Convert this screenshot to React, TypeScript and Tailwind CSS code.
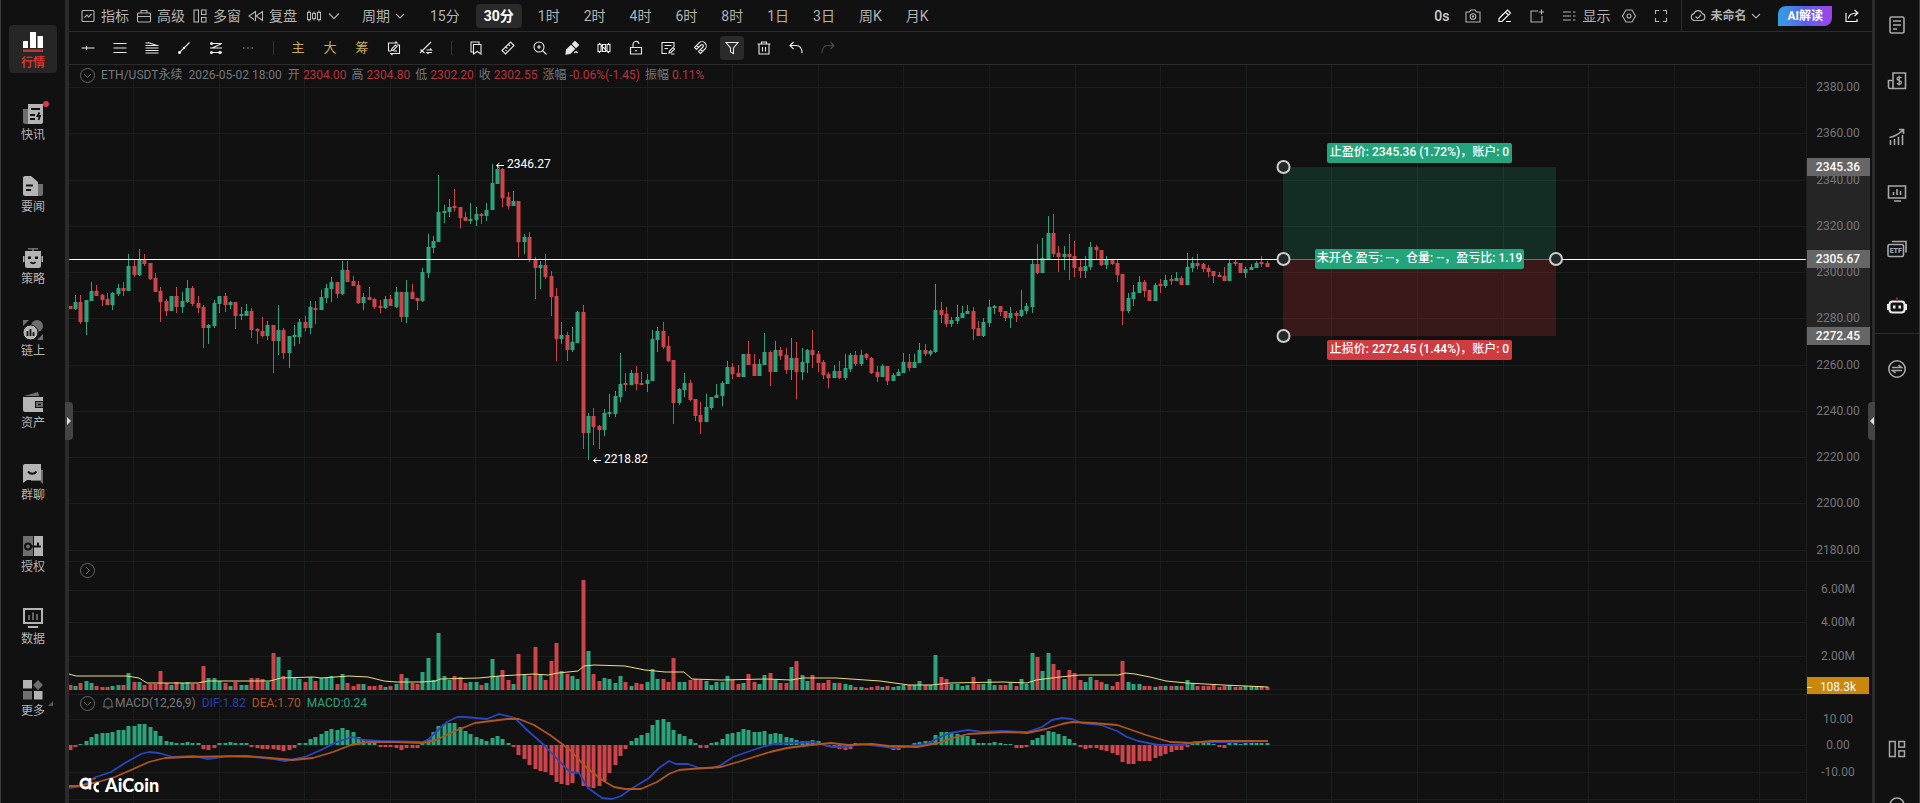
import { useState, type ReactNode } from 'react';

// [up, body top, body bottom, high, low]
type Candle = [number, number, number, number, number];

const CANDLES: Candle[] = [
  [0,306,309,306,309],[1,302,309,295,310],[0,302,322,295,324],[1,300,322,300,335],[1,291,301,282,301],
  [0,291,296,285,296],[0,295,300,294,306],[0,299,305,293,305],[1,293,305,292,310],[1,288,294,284,296],
  [0,288,291,282,296],[1,266,291,254,291],[0,266,275,259,277],[1,260,275,249,276],[0,259,264,254,266],
  [0,263,279,263,280],[0,278,292,273,292],[0,291,302,287,322],[0,301,311,299,316],[1,296,311,296,311],
  [0,296,307,287,313],[1,301,307,292,313],[1,288,302,280,303],[0,288,304,286,306],[0,303,308,296,313],
  [0,307,328,305,348],[1,325,328,324,344],[1,303,326,300,328],[1,296,304,296,313],[0,296,305,293,312],
  [1,302,305,301,309],[0,302,316,302,329],[1,314,316,307,320],[1,311,316,304,316],[0,311,330,308,338],
  [0,329,331,328,344],[0,331,336,317,337],[1,325,336,321,340],[0,325,341,325,373],[1,330,341,305,355],
  [0,330,353,328,359],[1,336,353,336,368],[1,335,337,325,346],[1,322,337,319,344],[0,322,328,316,331],
  [1,307,328,301,334],[0,308,310,301,324],[1,297,310,290,310],[1,288,298,284,303],[1,282,289,277,302],
  [0,282,294,282,298],[1,270,294,261,295],[0,270,282,261,282],[0,281,286,276,286],[0,285,303,281,304],
  [1,297,303,293,310],[0,297,300,287,300],[0,299,307,298,309],[0,306,308,300,313],[1,299,308,296,309],
  [0,299,306,295,306],[1,292,307,287,308],[0,292,317,292,322],[1,292,317,280,323],[0,292,299,284,299],
  [0,298,301,298,310],[1,272,301,268,302],[1,247,273,234,278],[1,241,248,236,253],[1,212,242,175,242],
  [1,211,213,205,223],[1,207,212,199,217],[0,206,208,189,211],[0,207,218,207,228],[0,217,221,212,221],
  [1,219,221,203,224],[1,214,220,207,226],[0,214,216,213,224],[1,210,216,203,221],[1,183,210,164,210],
  [1,169,184,166,184],[0,169,198,168,207],[0,197,206,192,209],[1,201,206,191,206],[0,201,242,201,257],
  [1,237,242,234,254],[0,237,259,232,262],[0,259,268,257,299],[1,265,268,261,289],[0,265,277,254,279],
  [0,276,297,271,316],[0,296,339,288,361],[1,335,339,322,344],[0,335,350,332,361],[1,342,350,327,352],
  [1,312,343,311,343],[0,312,433,305,449],[1,416,433,413,460],[0,416,427,408,445],[0,426,430,425,449],
  [1,413,430,409,436],[1,412,414,394,417],[1,396,414,391,417],[1,384,397,353,402],[0,383,385,373,391],
  [1,373,385,370,385],[0,373,384,366,390],[0,383,385,372,385],[1,380,384,374,392],[1,339,381,330,381],
  [1,331,340,327,352],[0,331,347,322,349],[0,346,361,336,362],[0,360,403,360,424],[1,389,403,388,405],
  [1,383,390,373,397],[0,383,400,380,401],[0,399,416,399,421],[0,415,422,402,434],[1,407,422,394,422],
  [1,397,408,397,410],[1,395,398,384,398],[1,383,396,381,406],[1,367,384,361,384],[0,367,374,363,379],
  [0,373,377,365,377],[1,354,377,354,377],[0,354,365,341,365],[0,364,376,354,376],[1,364,376,359,376],
  [1,352,365,333,365],[0,352,372,351,386],[1,350,372,341,372],[0,350,356,347,360],[0,355,370,348,374],
  [1,358,370,338,380],[0,358,372,342,399],[1,362,372,348,380],[1,350,363,349,373],[0,350,355,330,368],
  [0,354,363,351,372],[0,362,375,360,379],[0,374,378,372,388],[1,371,378,365,378],[0,371,378,361,379],
  [1,368,378,354,380],[1,355,369,353,372],[0,355,364,351,366],[1,355,364,350,366],[0,354,358,353,360],
  [0,358,373,357,374],[0,372,377,366,382],[1,366,377,364,377],[0,366,381,366,385],[1,375,381,373,381],
  [1,372,376,369,376],[1,362,373,353,373],[0,362,368,354,371],[1,362,368,354,368],[1,350,363,343,363],
  [0,350,354,344,356],[1,351,354,350,356],[1,310,352,284,353],[0,310,315,302,323],[0,314,324,307,327],
  [1,320,324,317,327],[1,317,321,305,324],[1,313,318,306,318],[1,311,314,305,314],[0,311,329,307,340],
  [0,328,336,321,336],[1,322,336,318,337],[1,307,323,300,327],[1,306,308,305,314],[0,306,312,306,316],
  [0,311,318,311,321],[1,313,318,307,328],[0,313,316,311,322],[1,310,316,290,317],[1,306,311,303,314],
  [1,264,307,260,313],[0,264,273,244,274],[1,258,273,238,273],[1,233,260,216,260],[0,233,254,214,257],
  [0,253,257,246,272],[1,254,257,246,270],[0,254,257,234,280],[0,256,268,241,277],[0,267,271,260,278],
  [1,266,271,256,278],[1,247,267,242,270],[0,247,250,245,260],[0,250,265,250,266],[1,260,265,256,269],
  [0,260,264,259,265],[0,263,275,260,282],[0,274,311,274,325],[1,298,311,293,313],[1,292,299,285,306],
  [1,282,293,276,293],[0,282,291,280,297],[0,290,301,290,301],[1,285,301,283,301],[0,284,286,279,293],
  [1,280,286,275,288],[0,279,281,275,285],[1,278,281,272,281],[0,278,285,276,285],[1,267,285,253,285],
  [1,263,268,257,272],[0,263,266,254,269],[0,264,269,263,272],[0,268,272,265,277],[0,271,276,271,283],
  [0,275,277,272,277],[0,276,281,267,281],[1,263,281,260,281],[0,262,264,260,266],[0,263,273,263,273],
  [1,269,273,267,278],[1,267,270,264,270],[1,263,268,261,268],[0,262,264,256,267],[0,263,267,261,267],
];

const VOLUMES = [
  5,4,7,9,7,4,3,3,4,5,5,17,8,8,5,6,6,19,7,5,8,7,8,6,6,24,12,12,9,7,4,8,5,5,12,12,11,8,37,33,14,20,12,11,8,
  13,9,12,12,14,6,16,7,4,6,6,4,4,5,3,4,6,16,12,7,6,18,32,10,57,14,10,14,13,7,8,8,5,7,31,14,20,10,6,36,15,14,
  43,16,10,29,47,19,16,14,11,110,39,16,9,12,11,7,14,8,4,7,6,8,21,11,11,8,32,8,8,10,11,10,9,5,8,8,14,10,6,7,
  16,8,6,15,17,10,7,7,23,29,15,9,15,7,7,10,7,7,6,5,3,3,2,3,4,3,4,3,4,5,5,5,9,5,5,35,13,11,6,6,4,5,13,6,6,11,
  5,5,5,7,4,11,6,37,33,19,37,26,20,11,20,17,10,8,13,10,8,6,4,8,29,8,6,6,4,4,3,4,4,4,4,4,10,7,4,4,4,5,3,4,5,
  3,3,4,4,4,4,3,
];

const HISTOGRAM = [
  -5,-2,1,4,8,11,12,12,13,15,15,19,19,21,21,18,14,9,4,3,2,2,3,2,2,-4,-5,-3,2,2,3,2,2,2,-2,-3,-4,-4,-4,-5,-6,
  -5,-3,2,2,6,8,11,14,16,15,17,15,13,8,6,3,2,-2,-2,-2,-3,-5,-3,-3,-3,2,6,13,19,21,22,22,18,14,11,8,6,4,7,9,6,
  2,-2,-10,-14,-20,-24,-26,-27,-30,-37,-39,-40,-38,-28,-41,-42,-43,-41,-36,-28,-20,-11,-4,4,7,10,12,20,25,26,
  23,15,11,9,6,2,-3,-3,2,3,6,11,12,13,16,15,13,13,14,11,12,11,8,7,5,4,4,5,4,2,-2,-3,-4,-5,-4,2,1,1,2,1,-2,-3,
  -5,-5,-3,-2,2,3,4,4,10,13,13,13,11,10,9,6,2,2,2,3,2,1,1,-3,-3,-2,5,7,10,14,13,11,9,6,2,-2,-4,-3,-3,-5,-6,-8,
  -10,-17,-19,-19,-16,-16,-16,-13,-11,-9,-7,-5,-5,-2,1,2,2,2,1,-2,-3,2,2,1,2,2,2,2,2,
];

const DIF = '69,788 82,786 96,777 111,772 125,763 141,754 149,752 159,753 173,757 194,756 208,759 228,756 254,757 274,759 285,761 305,757 321,750 337,742 352,737 364,740 380,741 422,742 428,740 436,732 447,722 457,717 465,717 487,719 499,714 515,718 527,730 544,745 560,762 570,772 579,773 588,788 602,798 612,799 621,796 631,789 649,778 659,768 669,761 676,764 688,764 699,768 713,768 721,765 733,757 750,751 762,747 774,744 791,743 813,742 831,747 844,747 860,744 880,746 893,748 909,746 927,744 938,738 950,733 968,730 982,732 1001,731 1027,732 1042,727 1052,720 1062,718 1072,719 1082,723 1101,725 1117,731 1127,737 1138,741 1158,745 1182,745 1195,742 1223,742 1268,741';
const DEA = '69,786 78,786 98,782 115,777 131,770 149,762 165,758 187,757 246,756 270,758 293,760 313,758 333,752 351,745 368,742 396,742 422,743 436,740 455,731 475,723 491,721 507,719 519,719 534,725 550,735 570,750 586,767 602,780 614,787 625,789 641,789 657,782 669,774 679,770 691,769 721,767 738,762 754,757 770,752 787,748 811,745 831,743 848,745 872,744 889,746 917,747 938,743 956,737 968,734 987,733 1007,732 1027,733 1046,729 1062,724 1072,722 1093,723 1117,725 1129,729 1146,735 1170,742 1191,743 1211,741 1268,741';
const VOL_MA = '69,674 76,676 127,676 139,678 147,683 198,683 208,681 270,681 281,678 313,677 321,678 349,676 368,677 384,681 396,682 422,682 436,681 440,679 479,678 499,676 534,674 548,675 558,673 578,671 584,666 594,665 625,666 645,670 665,672 684,672 692,679 721,680 766,679 791,680 803,678 836,678 880,681 909,685 931,685 950,683 1003,682 1027,683 1036,680 1060,677 1080,675 1119,675 1125,673 1135,674 1150,677 1166,681 1187,683 1223,685 1268,687';

const UP = '#2da37d';
const DOWN = '#cd454b';
const GRID = '#1c1d1d';
const STEP = 5.345;
const FONT = "font-[Roboto,'Noto_Sans_CJK_SC',sans-serif]";

const candleX = (i: number) => Math.round(69.5 + i * STEP);
const priceY = (price: number) => Math.round(87 + (2380 - price) * 2.3135);

const PRICES = [2380, 2360, 2340, 2320, 2300, 2280, 2260, 2240, 2220, 2200, 2180];

interface IconProps {
  size?: number;
  box?: number;
  className?: string;
  children: ReactNode;
}

function Icon({ size = 16, box = 16, className = '', children }: IconProps) {
  return (
    <svg
      width={size}
      height={size}
      viewBox={`0 0 ${box} ${box}`}
      fill="none"
      stroke="currentColor"
      strokeWidth={1.1}
      className={`shrink-0 ${className}`}
      aria-hidden="true"
    >
      {children}
    </svg>
  );
}

// ---------- top toolbar ----------

const LAYOUT_GLYPH = (
  <>
    <rect x="2" y="2" width="4.5" height="12" />
    <rect x="9.5" y="2" width="4.5" height="4.5" />
    <rect x="9.5" y="9.5" width="4.5" height="4.5" />
  </>
);

const MENUS = [
  { label: '指标', icon: <><rect x="2" y="2.5" width="12" height="11" rx="1" /><path d="M4.5 9.5 7 7l1.5 2 3-3" /></> },
  { label: '高级', icon: <><rect x="1.5" y="5" width="13" height="9" rx="1" /><path d="M5 5V2.5h6V5M1.5 8.5h13" /></> },
  { label: '多窗', icon: LAYOUT_GLYPH },
  { label: '复盘', icon: <path d="M7.5 3.5v9L1 8zM14.5 3.5v9L8 8z" /> },
];

const PERIODS = ['15分', '30分', '1时', '2时', '4时', '6时', '8时', '1日', '3日', '周K', '月K'];

function Caret({ wide }: { wide?: boolean }) {
  return (
    <Icon size={12} box={12}>
      <path d={wide ? 'M1 3.5l5 5 5-5' : 'M2 4l4 4 4-4'} />
    </Icon>
  );
}

function TopBar() {
  const [period, setPeriod] = useState('30分');

  return (
    <header className="flex h-8 shrink-0 items-center border-b border-[#2c2c2c] pl-[11px] pr-3 text-sm text-[#b2b2b2]">
      <div className="flex items-center gap-[7px]">
        {MENUS.map((m) => (
          <button key={m.label} className="flex items-center gap-[5px] whitespace-nowrap">
            <Icon>{m.icon}</Icon>
            {m.label}
          </button>
        ))}
        <button className="flex items-center gap-1.5 px-0.5" aria-label="K线样式">
          <Icon>
            <rect x="1.5" y="4.5" width="3" height="7" />
            <rect x="6.500" y="5.500" width="3" height="5" />
            <rect x="11.5" y="4.5" width="3" height="7" />
            <path d="M3 2.500v2M3 11.500v2M8 3.500v2M8 10.500v2M13 2.500v2M13 11.500v2" />
          </Icon>
          <Caret wide />
        </button>
      </div>
      <div className="ml-3 flex items-center gap-2">
        <button className="flex items-center gap-1 whitespace-nowrap px-2">
          周期
          <Caret />
        </button>
        {PERIODS.map((p) => (
          <button
            key={p}
            onClick={() => setPeriod(p)}
            className={`h-6 whitespace-nowrap rounded px-2 ${p === period ? 'bg-[#2a2a2a] font-bold text-white' : ''}`}
          >
            {p}
          </button>
        ))}
      </div>

      <div className="ml-auto flex items-center">
        <span className="mr-3 font-medium text-[#cfcfcf]">0s</span>
        <div className="mr-3 flex gap-2">
          <button className="flex size-6 items-center justify-center" aria-label="截图">
            <Icon>
              <path d="M1 4h3.5L6 2h4l1.5 2H15v10H1z" />
              <circle cx="8" cy="8.5" r="2.8" />
              <circle cx="8" cy="8.5" r="0.6" />
            </Icon>
          </button>
          <button className="flex size-6 items-center justify-center text-white" aria-label="画线">
            <Icon><path d="M2 13.5v-3L10.5 2l3 3L5 13.5zM8.5 4l3 3M9 13.5h5" /></Icon>
          </button>
          <button className="flex size-6 items-center justify-center" aria-label="新建">
            <Icon><path d="M9 3H2v11h11V8M12.5 1.5v5M10 4h5" /></Icon>
          </button>
        </div>
        <button className="mr-[7px] flex items-center gap-[5px] whitespace-nowrap">
          <Icon><path d="M2 4h8M2 8h8M2 12h8M12 4h2.5M12 8h2.5M12 12h2.5" /></Icon>
          显示
        </button>
        <div className="mr-2 flex gap-2">
          <button className="flex size-6 items-center justify-center" aria-label="设置">
            <Icon><path d="M5 2h6l3.5 6L11 14H5L1.5 8z" /><circle cx="8" cy="8" r="2" /></Icon>
          </button>
          <button className="flex size-6 items-center justify-center" aria-label="全屏">
            <Icon><path d="M2.5 6V2.5H6M10 2.5h3.5V6M13.5 10v3.5H10M6 13.5H2.5V10" /></Icon>
          </button>
        </div>
        <div className="flex h-8 items-center border-l border-[#2c2c2c] pl-2">
          <button className="flex items-center gap-1 whitespace-nowrap text-xs font-bold">
            <Icon>
              <path d="M4.5 12.5A3.5 3.5 0 0 1 4 5.6a4.3 4.3 0 0 1 8.2 0 3.5 3.5 0 0 1-.7 6.9zM5.500 8.500l2 2L11 7" />
            </Icon>
            未命名
            <Caret />
          </button>
          <button className="ml-4 h-5 whitespace-nowrap rounded-tl-lg rounded-br-lg bg-linear-to-r from-[#2fa0e0] via-[#5560f0] to-[#a040e8] px-[9px] text-xs font-bold text-white">
            AI解读
          </button>
          <button className="ml-3 text-white" aria-label="分享">
            <Icon><path d="M2 5v8.5h11V11M4.5 10.5C4.500 6.500 7.500 5 13.500 5M10.500 2 14 5l-3.500 3" /></Icon>
          </button>
        </div>
      </div>
    </header>
  );
}

// ---------- drawing toolbar ----------

interface Tool {
  name: string;
  icon: ReactNode;
  className?: string;
}

const LINE_TOOLS: Tool[] = [
  { name: '水平线', icon: <path d="M1.5 8h13M6.5 6v4" /> },
  { name: '平行线', icon: <path d="M1.5 3.5h13M1.5 8h13M1.5 12.5h13" /> },
  { name: '斐波那契', icon: <path d="M1.5 3h5M1.5 5.5h13M1.5 8h13M1.5 10.5h13M1.5 13h13M4 2.5l9 3" /> },
  { name: '线段', icon: <><path d="M3 13 13.5 2.5" /><circle cx="3.5" cy="12.5" r="1" fill="currentColor" /><circle cx="8" cy="8" r="0.6" /></> },
  { name: '通道', icon: <><path d="M2 3.5h12M2 8h12M2 12.5h12M4 8l9-4" /><circle cx="3.5" cy="3.5" r="1" /><circle cx="12" cy="12.5" r="1.2" /><circle cx="3.5" cy="12.5" r="1" /></> },
  { name: '更多', icon: <path d="M3 8h1.5M7.3 8h1.5M11.5 8H13" />, className: 'text-[#9a9a9a]' },
];

const SIGNAL_TOOLS: Tool[] = [
  { name: '策略画图', icon: <path d="M5 11H2.5V3H11L9.500 1.500M11 5h2.500v8.500H5l1.500 1.500M5.500 10.500 6 8.500 9.500 5 11 6.500 7.500 10zM7.500 11h3.500" /> },
  { name: '趋势工具', icon: <path d="M2 13 13 2M2.5 9.5 6.5 13M8.5 10h5L12 8.5M14 12.5H9l1.5 1.5" /> },
];

const EDIT_TOOLS: Tool[] = [
  { name: '书签', icon: <><path d="M5.5 4.500H13V14l-3.7-2.500L5.500 14z" /><path d="M5 12H3V2h8v2" /></> },
  { name: '测量', icon: <path d="M2 10.5 10.5 2 14 5.5 5.5 14zM6 7l1.5 1.5M8.5 4.5 10 6M5.5 10l1 1" /> },
  { name: '放大', icon: <><circle cx="7" cy="7" r="5" /><path d="m10.5 10.5 4 4M7 5v4M5 7h4" /></> },
  { name: '画笔', icon: <><path d="M2.5 10 7 5.5 10.5 9 6 13.5 2 14zM8.5 4 11 1.500 14.500 5 12 7.500z" fill="currentColor" /><path d="m10 13 2-1.5 1.5 1.5" /></> },
  { name: '隐藏K线', icon: <path d="M2 4.5h3v7H2zM6.5 4.5h3v7h-3zM11 4.5h3v7h-3zM3.5 3v1.5M3.5 11.5V13M12.5 3v1.5M12.5 11.5V13M3 3l10 10" /> },
  { name: '锁定', icon: <path d="M2.5 7.5h11V14h-11zM5 7.5V5a3 3 0 0 1 6-1M7 10.8h2" /> },
  { name: '备注', icon: <path d="M7 13.5H2v-11h12V7M4.5 5.5h7M4.5 8.5H8M9 13l.5-2L13 7.5 14.5 9 11 12.5zM11 14h3.5" /> },
  { name: '磁铁', icon: <path d="M2.5 7.5 7 3a4.2 4.2 0 0 1 6 6l-4.5 4.5-2-2L11 7a1.4 1.4 0 0 0-2-2L4.5 9.5zM4.5 5.5l2 2M8.5 9.5l2 2" /> },
  { name: '筛选', icon: <path d="M2 2.5h12L9.5 8v5.5l-3-1.5V8z" />, className: 'bg-[#2a2a2a]' },
  { name: '删除', icon: <path d="M1.5 4h13M5.5 4V2h5v2M3 4v10h10V4M6.5 7v4.5M9.5 7v4.5" /> },
  { name: '撤销', icon: <path d="M5.5 2 2 5.5 5.5 9M2 5.5h6c3.5 0 6 2.5 6 7.5" /> },
  { name: '重做', icon: <path d="M10.5 2 14 5.5 10.5 9M14 5.5H8c-3.5 0-6 2.5-6 7.5" />, className: 'text-[#4a4a4a]' },
];

function ToolButton({ tool }: { tool: Tool }) {
  return (
    <button aria-label={tool.name} className={`flex size-6 items-center justify-center rounded ${tool.className ?? ''}`}>
      <Icon>{tool.icon}</Icon>
    </button>
  );
}

function Divider() {
  return (
    <div className="flex w-[10px] justify-center">
      <div className="h-3.5 w-px bg-[#333]" />
    </div>
  );
}

function DrawBar() {
  return (
    <div className="flex h-[33px] shrink-0 items-center gap-2 border-b border-[#2c2c2c] px-[7px] text-[#e8e8e8]">
      {LINE_TOOLS.map((t) => <ToolButton key={t.name} tool={t} />)}
      <Divider />
      {['主', '大', '筹'].map((t) => (
        <button key={t} className="size-6 text-[13px] leading-6 text-[#c9ad4b]">{t}</button>
      ))}
      {SIGNAL_TOOLS.map((t) => <ToolButton key={t.name} tool={t} />)}
      <Divider />
      {EDIT_TOOLS.map((t) => <ToolButton key={t.name} tool={t} />)}
    </div>
  );
}

// ---------- charts ----------

function Pane({ top, rows, header, children, axis, className }: {
  top: number;
  rows: number[];
  header?: ReactNode;
  children: ReactNode;
  axis: ReactNode;
  className: string;
}) {
  const columns = Array.from({ length: 40 }, (_, i) => Math.round(133 + i * 85.6));
  return (
    <section className={`relative flex min-h-0 overflow-hidden ${className}`}>
      <svg className="h-full min-w-0 flex-1" aria-hidden="true">
        <g transform={`translate(-69 ${-top})`}>
          {columns.map((x) => <rect key={x} x={x} y={0} width={1} height={2000} fill={GRID} />)}
          {rows.map((y) => <rect key={y} x={69} y={y} width="100%" height={1} fill={GRID} />)}
          {children}
        </g>
      </svg>
      <svg className={`h-full w-[66px] shrink-0 border-l border-[#1e1e1e] ${FONT} text-xs`}>
        <g transform={`translate(-1 ${-top})`} fill="#74767c" textAnchor="middle">{axis}</g>
      </svg>
      {header}
    </section>
  );
}

function CollapseButton({ open, label }: { open: boolean; label: string }) {
  return (
    <button aria-label={label} className="text-[#666]">
      <Icon size={15} box={15} className="[stroke-width:1]">
        <circle cx="7.5" cy="7.5" r="7" />
        <path d={open ? 'M4 6l3.500 3.500L11 6' : 'M6 4l3.500 3.500L6 11'} />
      </Icon>
    </button>
  );
}

const QUOTE = [
  ['开', '2304.00'],
  ['高', '2304.80'],
  ['低', '2302.20'],
  ['收', '2302.55'],
  ['涨幅', '-0.06%(-1.45)'],
  ['振幅', '0.11%'],
];

function PriceTag({ price }: { price: number }) {
  const y = priceY(price);
  return (
    <>
      <rect x={0} y={y - 9} width={64} height={18} fill="#666" />
      <text x={32} y={y + 4} fill="#fff" fontWeight="500">{price.toFixed(2)}</text>
    </>
  );
}

function PositionLabel({ y, width, fill, children }: { y: number; width: number; fill: string; children: string }) {
  return (
    <>
      <rect x={1419.5 - width / 2} y={y} width={width} height={20} rx={2} fill={fill} />
      <text x={1419.5} y={y + 13} fill="#fff" fontWeight="500" textAnchor="middle">{children}</text>
    </>
  );
}

function PricePane() {
  return (
    <Pane
      top={65}
      rows={PRICES.map(priceY)}
      className="flex-1"
      header={
        <div className="absolute left-[11px] top-0 flex h-5 items-center gap-1.5 whitespace-nowrap text-xs text-[#74787c]">
          <CollapseButton open label="收起主图" />
          <span>ETH/USDT永续</span>
          <span>2026-05-02 18:00</span>
          <span className="flex gap-[5px]">
            {QUOTE.map(([label, value]) => (
              <span key={label} className="flex gap-[3px]">
                {label}
                <span className="text-[#b8343f]">{value}</span>
              </span>
            ))}
          </span>
        </div>
      }
      axis={
        <>
          <rect x={0} y={167} width={64} height={169} fill="#252526" />
          {PRICES.map((p) => <text key={p} x={32} y={priceY(p) + 4}>{p.toFixed(2)}</text>)}
          <PriceTag price={2345.36} />
          <PriceTag price={2305.67} />
          <PriceTag price={2272.45} />
        </>
      }
    >
      {CANDLES.map(([up, top, bottom, high, low], i) => (
        <g key={i} fill={up ? UP : DOWN}>
          <rect x={candleX(i)} y={high} width={1} height={low - high} />
          <rect x={candleX(i) - 1.5} y={top} width={4} height={bottom - top} rx={0.5} />
        </g>
      ))}
      <rect x={69} y={259} width="100%" height={1} fill="#fff" />
      <g className={`${FONT} text-xs`} fill="#fff">
        <path d="M504 165.5h-7.5m3-2.5-3 2.5 3 2.5M601 460.5h-7.5m3-2.5-3 2.5 3 2.5" fill="none" stroke="#fff" />
        <text x={507} y={168}>2346.27</text>
        <text x={604} y={463}>2218.82</text>

        {/* long position box */}
        <rect x={1283} y={259} width={273} height={1} fill="#707070" />
        <rect x={1283} y={167} width={273} height={92} fill="#1fb887" fillOpacity={0.17} />
        <rect x={1283} y={260} width={273} height={76} fill="#d6373c" fillOpacity={0.2} />
        <PositionLabel y={143} width={185} fill="#24a47b">止盈价: 2345.36 (1.72%)，账户: 0</PositionLabel>
        <PositionLabel y={249} width={209} fill="#24a47b">未开仓 盈亏: --，仓量: --，盈亏比: 1.19</PositionLabel>
        <PositionLabel y={340} width={185} fill="#d03b40">止损价: 2272.45 (1.44%)，账户: 0</PositionLabel>
      </g>
      <g fill="#26292c" stroke="#cdcdcd" strokeWidth={2}>
        <circle cx={1283.5} cy={167} r={6} />
        <circle cx={1283.5} cy={259} r={6} />
        <circle cx={1283.5} cy={336} r={6} />
        <circle cx={1556} cy={259} r={6} />
      </g>
    </Pane>
  );
}

function VolumePane() {
  return (
    <Pane
      top={562}
      rows={[590, 622, 656, 689]}
      className="h-[133px] shrink-0 border-t border-[#1e1e1e]"
      header={
        <div className="absolute left-[11px] top-0 flex h-4 items-center">
          <CollapseButton open={false} label="展开成交量" />
        </div>
      }
      axis={
        <>
          <text x={32} y={593}>6.00M</text>
          <text x={32} y={626}>4.00M</text>
          <text x={32} y={660}>2.00M</text>
          <rect x={0} y={677} width={63} height={17} fill="#cb860c" />
          <rect x={1} y={687} width={5} height={1} fill="#fff" />
          <text x={32} y={691} fill="#fff">108.3k</text>
        </>
      }
    >
      {VOLUMES.map((v, i) => (
        <rect key={i} x={candleX(i) - 1.5} y={690 - v} width={4} height={v} fill={CANDLES[i][0] ? UP : DOWN} />
      ))}
      <polyline points={VOL_MA} fill="none" stroke="#e9e07c" />
    </Pane>
  );
}

function Logo() {
  return (
    <div className="absolute bottom-2 left-2.5 flex h-5 items-center gap-1 text-white">
      <svg width="22" height="18" viewBox="0 0 22 18" fill="none" stroke="currentColor" strokeWidth="3" aria-hidden="true">
        <circle cx="6.5" cy="7.5" r="4.5" />
        <path d="M11 2v11.5" strokeWidth="2.5" />
        <path d="M20 7.5a3.8 3.8 0 1 0 0 7.5" strokeWidth="2.6" />
        <circle cx="15.5" cy="2.5" r="1.2" fill="#b5453a" stroke="none" />
      </svg>
      <span className="font-[Lato,sans-serif] text-lg font-black leading-5">AiCoin</span>
    </div>
  );
}

function MacdPane() {
  return (
    <Pane
      top={695}
      rows={[719, 745, 772, 799]}
      className="h-[109px] shrink-0 border-t border-[#1e1e1e]"
      header={
        <>
          <div className="absolute left-[11px] top-0 flex h-4 items-center gap-1.5 whitespace-nowrap text-xs text-[#74787c]">
            <CollapseButton open label="收起MACD" />
            <span className="flex items-center">
              <Icon size={14}><path d="M2 12.5h12M3.5 12.5v-5a4.5 4.5 0 0 1 9 0v5M6.5 14.5h3M8 1.5V3" /></Icon>
              MACD(12,26,9)
            </span>
            <span className="text-[#2a3fae]">DIF:1.82</span>
            <span className="text-[#b0561c]">DEA:1.70</span>
            <span className="text-[#2da37d]">MACD:0.24</span>
          </div>
          <Logo />
        </>
      }
      axis={
        <>
          <text x={32} y={723}>10.00</text>
          <text x={32} y={749}>0.00</text>
          <text x={32} y={776}>-10.00</text>
        </>
      }
    >
      {HISTOGRAM.map((v, i) => (
        <rect
          key={i}
          x={candleX(i) - 1.5}
          y={v > 0 ? 745 - v : 745}
          width={4}
          height={Math.abs(v)}
          fill={v > 0 ? UP : DOWN}
        />
      ))}
      <polyline points={DIF} fill="none" stroke="#2a45c0" strokeWidth={1.8} strokeLinejoin="round" />
      <polyline points={DEA} fill="none" stroke="#b0561c" strokeWidth={1.8} strokeLinejoin="round" />
    </Pane>
  );
}

// ---------- side bars ----------

const DIM = '#6f6f6f';

const NAV: { label: string; icon: ReactNode; dot?: boolean; corner?: boolean }[] = [
  {
    label: '行情',
    icon: <><path d="M0 9h5v7H0zM7 0h6v16H7zM14.5 4H20v12h-5.5z" fill="#fff" /><path d="M0 17.5h20V20H0z" fill="#c8362f" /></>,
  },
  {
    label: '快讯',
    dot: true,
    icon: <><path d="M0 5h5v15H2a2 2 0 0 1-2-2z" fill={DIM} /><path d="M5 0h15v18a2 2 0 0 1-2 2H5z" /><path d="M8 5h9M7 11h5M7 15h5M16.5 8.5l-2 3.5H17l-1.5 4" stroke="#111" strokeWidth="1.8" fill="none" /></>,
  },
  {
    label: '要闻',
    icon: <><path d="M12 8h8v10a2 2 0 0 1-2 2h-6z" fill={DIM} /><path d="M0 2a2 2 0 0 1 2-2h6l7 6v14H2a2 2 0 0 1-2-2z" /><path d="M3 9.5h7M3 14h5" stroke="#111" strokeWidth="1.8" /></>,
  },
  {
    label: '策略',
    icon: <><path d="M5 0h10v1.5H5zM9 1h2v3H9z" fill={DIM} /><path d="M2 3h16v15a2 2 0 0 1-2 2H4a2 2 0 0 1-2-2zM0 8h1.5v6H0zM18.5 8H20v6h-1.5z" /><path d="M5 8.500h3v2.500H5zM12 8.500h3v2.500h-3z" fill="#111" /><path d="M7.500 14c1.500 1.800 3.500 1.800 5 0" stroke="#111" strokeWidth="1.8" fill="none" /></>,
  },
  {
    label: '链上',
    icon: <><circle cx="14" cy="6" r="6" fill={DIM} /><path d="M0 0h6L0 6zM20 20h-6l6-6z" fill={DIM} /><circle cx="7.5" cy="12.5" r="7.5" stroke="#111" /><path d="M4.5 11v5M7.5 9v7M10.5 12v4" stroke="#111" strokeWidth="1.8" /></>,
  },
  {
    label: '资产',
    icon: <><path d="m1 4 14-4 1 4z" fill={DIM} /><path d="M0 5h20v4h-8v7h8v4H2a2 2 0 0 1-2-2z" /><path d="M13 10h7v5h-7z" fill={DIM} /><path d="M15 12.5h3" stroke="#111" strokeWidth="1.5" /></>,
  },
  {
    label: '群聊',
    icon: <><path d="M8 6h12v14l-3-3H8z" fill={DIM} /><path d="M0 2a2 2 0 0 1 2-2h16v16H4l-4 3z" /><path d="M5 7.5c2.5 3 6 3 8.5 0" stroke="#111" strokeWidth="2" fill="none" /></>,
  },
  {
    label: '授权',
    icon: <><path d="M0 0h10v20H0z" fill={DIM} /><path d="M11 0h9v20h-9z" /><circle cx="5" cy="10.5" r="3" fill="none" stroke="#111" strokeWidth="2" /><path d="M8 10.5h10M15 10.5v-4" stroke="#111" strokeWidth="2" /></>,
  },
  {
    label: '数据',
    icon: <><path d="M1 1h18v14H1zM5 19h10" fill="none" stroke="#b4b4b4" strokeWidth="2" /><path d="M6 7v5M10 4.5V12M14 6v6" stroke={DIM} strokeWidth="1.8" /></>,
  },
  {
    label: '更多',
    corner: true,
    icon: <><path d="M0 0h9v8.500H0zM11 11h8.500v8.500H11z" /><path d="M0 11h9v8.500H0zM15 0l5 5-5 5-5-5z" fill={DIM} /></>,
  },
];

function LeftNav() {
  const [active, setActive] = useState('行情');
  return (
    <nav className="flex w-[65px] shrink-0 flex-col items-center gap-6 border-l border-[#3c3c3c] pt-[25px]">
      {NAV.map((item) => {
        const on = item.label === active;
        return (
          <button
            key={item.label}
            onClick={() => setActive(item.label)}
            className={`relative flex size-12 shrink-0 flex-col items-center rounded pt-[7px] text-xs ${
              on ? 'bg-[#262626] font-bold text-[#d8352c]' : 'text-[#b4b4b4]'
            }`}
          >
            <svg width="20" height="20" viewBox="0 0 20 20" fill="#b4b4b4" aria-hidden="true">{item.icon}</svg>
            <span className="mt-px leading-5">{item.label}</span>
            {item.dot && <span className="absolute right-2 top-1 size-1.5 rounded-full bg-[#d63a4c]" />}
            {item.corner && (
              <svg className="absolute right-1 top-7" width="5" height="5" aria-hidden="true"><path d="M5 0v5H0z" fill="#555" /></svg>
            )}
          </button>
        );
      })}
    </nav>
  );
}

const RIGHT_TOOLS: Tool[] = [
  { name: '资讯', icon: <><rect x="3" y="2" width="14" height="16" rx="1.5" /><path d="M6 6h8M6 10h8M6 14h4" /></> },
  { name: '交易', icon: <><path d="M6 17.5H3A1.5 1.5 0 0 1 1.5 16V9.5H6M6 2h12.5v15.5H6z" /><path d="M14.5 7c-1.5-1.5-4.5-1.2-4.5.8 0 2.2 4.5 1.4 4.5 3.8 0 2-3 2.2-4.5.6M12.2 4.8v9.8" strokeWidth="1.3" /></> },
  { name: '走势', icon: <path d="M3.5 18v-5M7.5 18v-6M11.5 18v-8M15.5 18V8M2.5 10.5C8 9.5 12 7 16 3M12 2.5h4.5V7" /> },
  { name: '行情看板', icon: <path d="M1.5 3h17v12h-17zM7 18h7M6.5 12V9M10 12V6M13.5 12V8" /> },
  {
    name: 'ETF',
    icon: (
      <>
        <rect x="1" y="5.5" width="15.5" height="12" rx="1.5" />
        <path d="M5 2.5h14v11" />
        <text x="8.75" y="14" textAnchor="middle" fontSize="7" fontWeight="900" fill="currentColor" stroke="none">ETF</text>
      </>
    ),
  },
];

function RightBar() {
  return (
    <aside className="flex w-[45px] shrink-0 flex-col items-center overflow-hidden border-r border-[#3c3c3c] pt-[15px] text-[#a8a8a8]">
      <div className="flex flex-col gap-9 pb-[18px]">
        {RIGHT_TOOLS.map((t) => (
          <button key={t.name} aria-label={t.name}>
            <Icon size={20} box={20} className="[stroke-width:1.6]">{t.icon}</Icon>
          </button>
        ))}
        <button aria-label="机器人" className="text-[#ececec]">
          <svg width="20" height="20" viewBox="0 0 20 20" aria-hidden="true">
            <rect x="2.5" y="6.5" width="15" height="11" rx="3" fill="none" stroke="currentColor" strokeWidth="2" />
            <path d="M0 9h2v6H0zM18 9h2v6h-2zM6 10.5h2.5v3H6zM11.5 10.5H14v3h-2.5z" fill="currentColor" />
            <path d="M10 2.5V6" stroke="#a33" strokeWidth="1.5" />
          </svg>
        </button>
      </div>
      <div className="h-px w-full shrink-0 bg-[#2c2c2c]" />
      <button aria-label="兑换" className="mt-[25px]">
        <Icon size={20} box={20} className="[stroke-width:1.6]">
          <circle cx="10" cy="10" r="8.2" />
          <path d="M5 8.5h9.5l-3-2.500M15 11.500H5.500l3 2.500" />
        </Icon>
      </button>
      <div className="mt-auto -mb-3 flex flex-col gap-9">
        <button aria-label="布局"><Icon size={20} className="[stroke-width:1.2]">{LAYOUT_GLYPH}</Icon></button>
        <button aria-label="帮助">
          <Icon size={20} box={20} className="[stroke-width:1.6]"><circle cx="10" cy="10" r="7" /></Icon>
        </button>
      </div>
    </aside>
  );
}

export default function App() {
  return (
    <div className={`flex h-screen w-full overflow-hidden bg-[#111] ${FONT}`}>
      <LeftNav />
      <div className="relative w-1 shrink-0 bg-[#2b2b2b]">
        <button
          aria-label="展开左侧栏"
          className="absolute left-0 top-1/2 z-10 flex h-[38px] w-2 items-center justify-center rounded-r-sm bg-[#444]"
        >
          <svg width="4" height="8" aria-hidden="true"><path d="M0 0v8l4-4z" fill="#ddd" /></svg>
        </button>
      </div>
      <main className="flex min-w-0 flex-1 flex-col">
        <TopBar />
        <DrawBar />
        <PricePane />
        <VolumePane />
        <MacdPane />
      </main>
      <div className="relative w-[3px] shrink-0 bg-[#2b2b2b]">
        <button
          aria-label="展开右侧栏"
          className="absolute right-0 top-1/2 z-10 flex h-[38px] w-[7px] items-center justify-center rounded-l-sm bg-[#444]"
        >
          <svg width="4" height="8" aria-hidden="true"><path d="M4 0v8L0 4z" fill="#ddd" /></svg>
        </button>
      </div>
      <RightBar />
    </div>
  );
}
